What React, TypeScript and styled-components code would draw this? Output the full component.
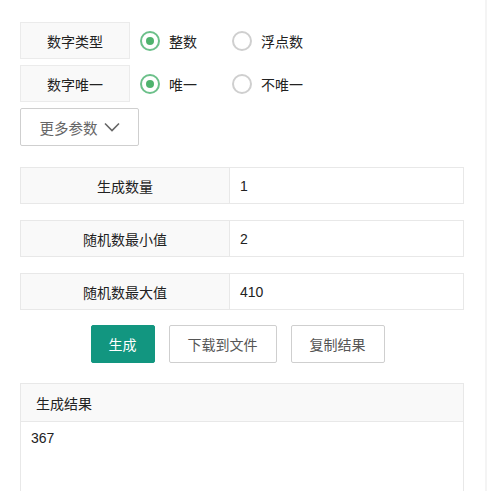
import React, {FunctionComponent} from 'react';
import styled, {createGlobalStyle} from 'styled-components';

const GlobalStyle = createGlobalStyle`
  html, body {
    margin: 0;
    padding: 0;
    background: #fff;
  }
  body {
    font-family: "Liberation Sans", "Noto Sans CJK SC", Arial, sans-serif;
    font-size: 14px;
    color: #222;
  }
`

const StyledPage = styled.div`
  position: relative;
  padding: 22px 21px 0 20px;
  height: 491px;
  box-sizing: border-box;
  overflow: hidden;
  border-right: 2px solid #f4f4f4;
`

const OptionRow = styled.div`
  display: flex;
  align-items: center;
  margin-bottom: 6px;
`

const OptionLabel = styled.div`
  width: 110px;
  height: 37px;
  box-sizing: border-box;
  display: flex;
  align-items: center;
  justify-content: center;
  background: #f9f9f9;
  border: 1px solid #ebebeb;
  color: #222;
`

const RadioItem = styled.label`
  display: flex;
  align-items: center;
  margin-left: 10px;
  width: 82px;
`

const RadioCircle = styled.span<{$checked?: boolean}>`
  width: 20px;
  height: 20px;
  box-sizing: border-box;
  border-radius: 50%;
  border: 2px solid ${p => (p.$checked ? '#6cc08a' : '#cfcfcf')};
  display: flex;
  align-items: center;
  justify-content: center;
  margin-right: 9px;
  &::after {
    content: '';
    width: 8px;
    height: 8px;
    border-radius: 50%;
    background: ${p => (p.$checked ? '#4fb36e' : 'transparent')};
  }
`

const MoreButton = styled.button`
  width: 119px;
  height: 38px;
  display: flex;
  align-items: center;
  justify-content: center;
  gap: 6px;
  background: #fff;
  border: 1px solid #cfcfcf;
  border-radius: 2px;
  font: inherit;
  font-size: 14.5px;
  color: #666;
  padding: 0;
`

const ParamTable = styled.div`
  margin-top: 21px;
  display: flex;
  flex-direction: column;
  gap: 16px;
`

const ParamRow = styled.div`
  display: grid;
  grid-template-columns: 209px 1fr;
  height: 37px;
  border: 1px solid #e8e8e8;
  box-sizing: border-box;
`

const ParamLabel = styled.div`
  background: #f9f9f9;
  border-right: 1px solid #e8e8e8;
  display: flex;
  align-items: center;
  justify-content: center;
`

const ParamValue = styled.div`
  display: flex;
  align-items: center;
  padding-left: 10px;
`

const ButtonBar = styled.div`
  display: flex;
  justify-content: center;
  gap: 14px;
  margin-top: 15px;
  padding-right: 9px;
`

const ActionButton = styled.button<{$primary?: boolean; $width: number}>`
  width: ${p => p.$width}px;
  height: 38px;
  border-radius: 2px;
  font: inherit;
  padding: 0;
  border: 1px solid ${p => (p.$primary ? '#129680' : '#cfcfcf')};
  background: ${p => (p.$primary ? '#129680' : '#fff')};
  color: ${p => (p.$primary ? '#fff' : '#555')};
`

const ResultPanel = styled.div`
  margin-top: 20px;
  border: 1px solid #e8e8e8;
  border-bottom: none;
  height: 200px;
`

const ResultHeader = styled.div`
  height: 37px;
  display: flex;
  align-items: center;
  padding-left: 15px;
  background: #f9f9f9;
  border-bottom: 1px solid #e8e8e8;
`

const ResultBody = styled.div`
  padding: 8px 10px;
`

const Chevron: FunctionComponent = () => (
    <svg width="16" height="10" viewBox="0 0 16 10" fill="none">
        <path d="M1 1.5 L8 8.5 L15 1.5" stroke="#666" strokeWidth="1.6" />
    </svg>
)

const App: FunctionComponent = (): JSX.Element => {
    const params = [
        {label: '生成数量', value: '1'},
        {label: '随机数最小值', value: '2'},
        {label: '随机数最大值', value: '410'}
    ];

    return (
        <StyledPage>
            <GlobalStyle />
            <OptionRow>
                <OptionLabel>数字类型</OptionLabel>
                <RadioItem><RadioCircle $checked />整数</RadioItem>
                <RadioItem><RadioCircle />浮点数</RadioItem>
            </OptionRow>
            <OptionRow>
                <OptionLabel>数字唯一</OptionLabel>
                <RadioItem><RadioCircle $checked />唯一</RadioItem>
                <RadioItem><RadioCircle />不唯一</RadioItem>
            </OptionRow>
            <MoreButton>更多参数 <Chevron /></MoreButton>
            <ParamTable>
                {params.map(p => (
                    <ParamRow key={p.label}>
                        <ParamLabel>{p.label}</ParamLabel>
                        <ParamValue>{p.value}</ParamValue>
                    </ParamRow>
                ))}
            </ParamTable>
            <ButtonBar>
                <ActionButton $primary $width={64}>生成</ActionButton>
                <ActionButton $width={108}>下载到文件</ActionButton>
                <ActionButton $width={94}>复制结果</ActionButton>
            </ButtonBar>
            <ResultPanel>
                <ResultHeader>生成结果</ResultHeader>
                <ResultBody>367</ResultBody>
            </ResultPanel>
        </StyledPage>
    )
}

export default App;
